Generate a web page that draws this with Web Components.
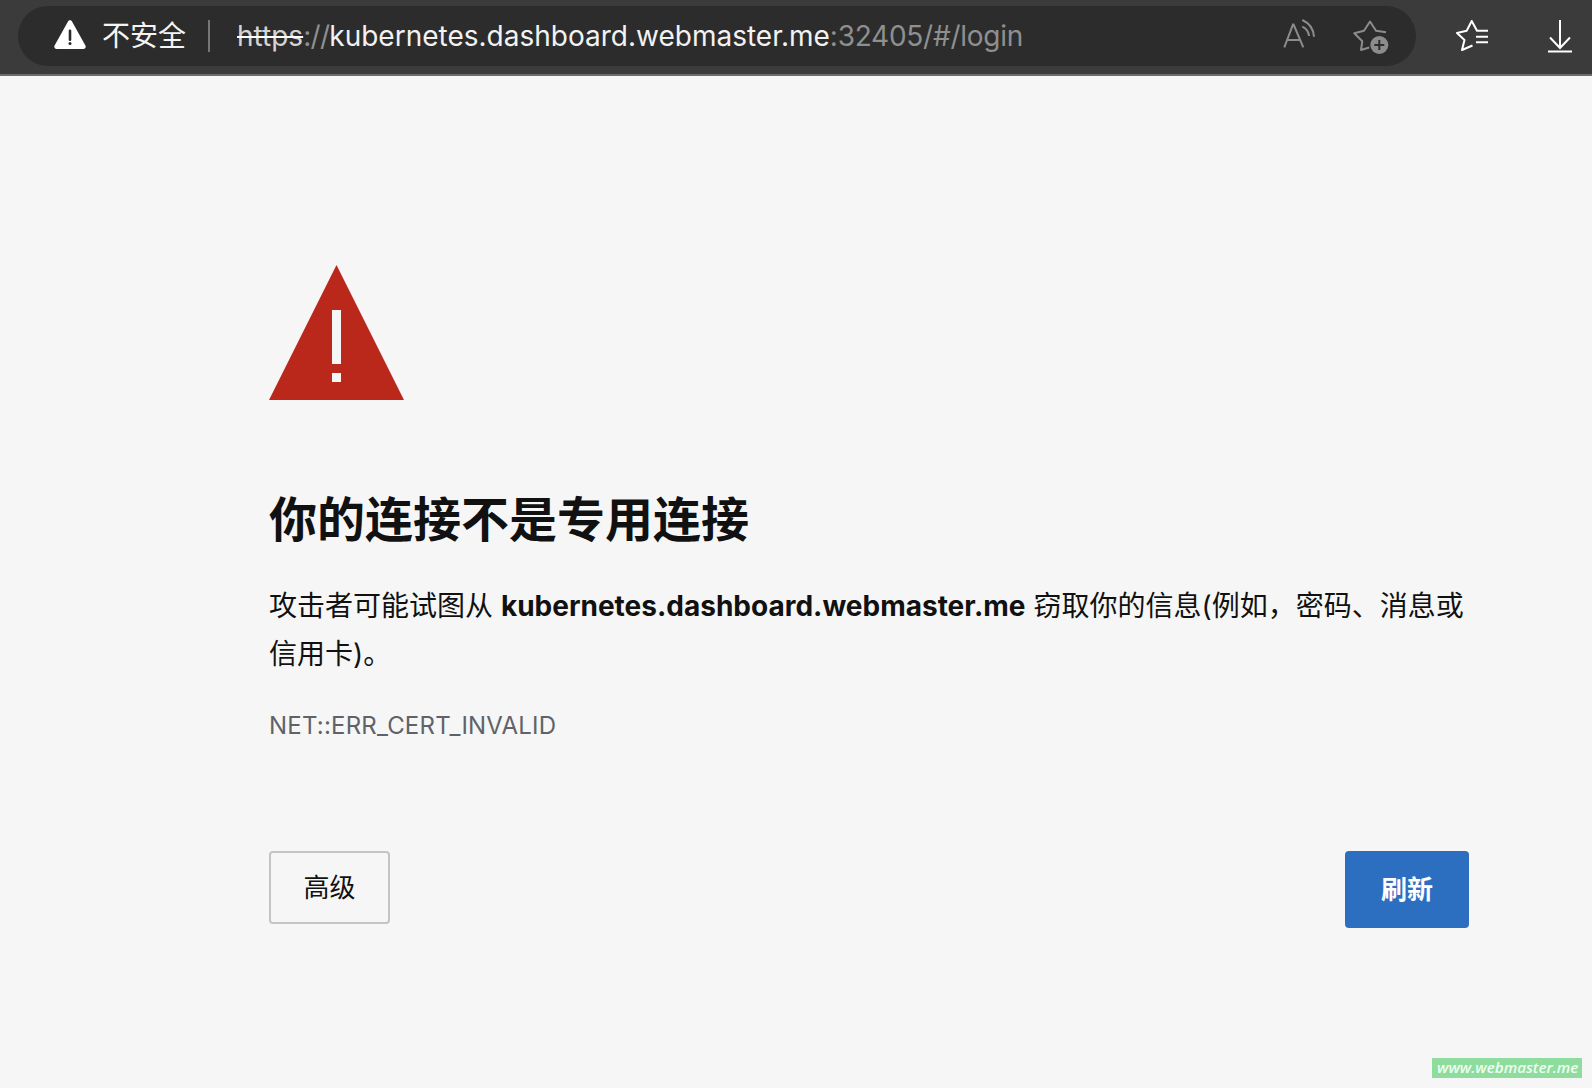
<!DOCTYPE html>
<html lang="zh">
<head>
<meta charset="utf-8">
<title>隐私错误</title>
<style>
  html, body { margin: 0; height: 100%; }
  body {
    display: flex;
    flex-direction: column;
    height: 1088px;
    overflow: hidden;
    background: #f6f6f6;
    font-family: "Inter", "Noto Sans CJK SC", sans-serif;
  }
  b { font-weight: 700; }
</style>
</head>
<body>
<browser-bar url-host="kubernetes.dashboard.webmaster.me" url-rest=":32405/#/login"></browser-bar>
<error-page>
  <span slot="title">你的连接不是专用连接</span>攻击者可能试图从 <b>kubernetes.dashboard.webmaster.me</b> 窃取你的信息(例如，密码、消息或<br>信用卡)。<span slot="code">NET::ERR_CERT_INVALID</span>
</error-page>
<water-mark>www.webmaster.me</water-mark>

<script>
// Toolbar with the address pill and the icons on the right
class BrowserBar extends HTMLElement {
    constructor() {
        super();
        this.attachShadow({mode: 'open'});
        this.shadowRoot.innerHTML = `
            <style>
                :host {
                    display: flex;
                    align-items: center;
                    box-sizing: border-box;
                    height: 76px;
                    padding: 6px 0 8px 18px;
                    background: #3b3b3b;
                    border-bottom: 2px solid #6c6c6c;
                    font-family: "Inter", "Noto Sans CJK SC", sans-serif;
                    flex: none;
                }
                .pill {
                    display: flex;
                    align-items: center;
                    box-sizing: border-box;
                    width: 1398px;
                    height: 60px;
                    padding: 0 27px 0 36px;
                    border-radius: 30px;
                    background: #2c2c2c;
                    color: #fff;
                    font-size: 28px;
                }
                .warn { width: 32px; height: 30px; margin-top: -2px; flex: none; }
                .label { margin: 0 0 4px 16px; font-size: 28px; color: #f4f4f4; }
                .sep { width: 2px; height: 32px; margin: 0 27px 0 22px; background: #777; flex: none; }
                .url { flex: 1; white-space: nowrap; color: #8f8f8f; }
                .url s { color: #d4d4d4; text-decoration-color: #fff; text-decoration-thickness: 2px; }
                .url .proto { letter-spacing: -.7px; }
                .url .host { color: #f2f2f2; }
                .url .rest { letter-spacing: -.25px; }
                .read { width: 32px; height: 30px; margin: 0 38px 4px 0; flex: none; }
                .fav { width: 36px; height: 36px; margin-top: 4px; flex: none; }
                .tools { display: flex; align-items: center; }
                .list { width: 36px; height: 34px; margin: 2px 0 0 39px; }
                .down { width: 26px; height: 33px; margin: 1px 0 0 56px; }
            </style>
            <div class="pill">
                <svg class="warn" viewBox="0 0 32 30">
                    <path fill="#fff" d="M16 .3c.9 0 1.600.5 2 1.200l13.400 24.100c.9 1.600-.2 3.400-2 3.400H2.600c-1.800 0-2.900-1.800-2-3.400L14 1.500c.4-.7 1.100-1.200 2-1.200z"/>
                    <rect x="14.700" y="9.500" width="2.600" height="11.500" rx="1.300" fill="#2c2c2c"/>
                    <circle cx="16" cy="23.500" r="1.500" fill="#2c2c2c"/>
                </svg>
                <span class="label">不安全</span>
                <span class="sep"></span>
                <span class="url"><s>https</s><span class="proto">://</span><span class="host"></span><span class="rest"></span></span>
                <svg class="read" viewBox="0 0 32 30" fill="none" stroke="#8c8c8c" stroke-width="2">
                    <path d="M1.300 28.300 10 5.500h.6l9.700 22.800M4.500 21H17"/>
                    <path d="M19.300 1C26 4 30.500 10 31 17.700M19.300 7.700c3.700 1.800 6.400 5.300 6.700 9.300"/>
                </svg>
                <svg class="fav" viewBox="0 0 36 36" fill="none">
                    <path stroke="#8c8c8c" stroke-width="2" stroke-linejoin="round" d="M33 12.300 23 10.700 17 1.500l-6 9.200-9.700 2.600 8 8L8 30l9-2.700"/>
                    <circle cx="26.300" cy="25" r="10.500" fill="#2c2c2c"/>
                    <circle cx="26.300" cy="25" r="9" fill="#8c8c8c"/>
                    <path stroke="#2c2c2c" stroke-width="2" d="M26.300 20v10M21.300 25h10"/>
                </svg>
            </div>
            <div class="tools">
                <svg class="list" viewBox="0 0 36 34" fill="none" stroke="#fff" stroke-width="2" stroke-linejoin="round">
                    <path d="M17.500 25.500 7 30l2.500-10L2 13l9.700-2.300L16.700 1 22 10.700h11M21 16.700h12M21 22.300h12"/>
                </svg>
                <svg class="down" viewBox="0 0 26 33" fill="none" stroke="#fff" stroke-width="2">
                    <path d="M13 0v28M3 17.500 13 28l10-10.500M1 31.500h24"/>
                </svg>
            </div>
        `;
    }

    connectedCallback() {
        this.shadowRoot.querySelector('.host').textContent = this.getAttribute('url-host');
        this.shadowRoot.querySelector('.rest').textContent = this.getAttribute('url-rest');
    }
}

// The interstitial itself: icon, heading, text, error code and two buttons
class ErrorPage extends HTMLElement {
    constructor() {
        super();
        this.attachShadow({mode: 'open'});
        this.shadowRoot.innerHTML = `
            <style>
                :host {
                    display: block;
                    flex: 1;
                    box-sizing: border-box;
                    padding: 189px 123px 0 269px;
                    color: #111;
                    font-family: "Inter", "Noto Sans CJK SC", sans-serif;
                }
                .icon { display: block; width: 135px; height: 135px; }
                h1 {
                    margin: 86px 0 0;
                    font-size: 48px;
                    line-height: 68px;
                    font-weight: 700;
                    color: #111;
                }
                .text {
                    margin-top: 28px;
                    font-size: 28px;
                    line-height: 48px;
                    color: #111;
                }
                .code {
                    margin-top: 30px;
                    font-size: 24px;
                    line-height: 36px;
                    letter-spacing: .2px;
                    color: #5f6368;
                }
                .actions {
                    display: flex;
                    justify-content: space-between;
                    align-items: flex-start;
                    margin-top: 107px;
                }
            </style>
            <svg class="icon" viewBox="0 0 135 135">
                <polygon points="67.500,0 135,135 0,135" fill="#b9281a"/>
                <rect x="63" y="45" width="9" height="54" fill="#f6f6f6"/>
                <rect x="63" y="108" width="9" height="9" fill="#f6f6f6"/>
            </svg>
            <h1><slot name="title"></slot></h1>
            <div class="text"><slot></slot></div>
            <div class="code"><slot name="code"></slot></div>
            <div class="actions">
                <action-button>高级</action-button>
                <action-button primary>刷新</action-button>
            </div>
        `;
    }
}

class ActionButton extends HTMLElement {
    constructor() {
        super();
        this.attachShadow({mode: 'open'});
        this.shadowRoot.innerHTML = `
            <style>
                :host {
                    display: flex;
                    align-items: center;
                    justify-content: center;
                    box-sizing: border-box;
                    width: 121px;
                    height: 73px;
                    padding-bottom: 4px;
                    border: 2px solid #c4c4c4;
                    border-radius: 4px;
                    font-size: 26px;
                    color: #111;
                }
                :host([primary]) {
                    width: 124px;
                    height: 77px;
                    border: none;
                    background: #2c6fc1;
                    color: #fff;
                    font-weight: 700;
                }
            </style>
            <slot></slot>
        `;
    }
}

class WaterMark extends HTMLElement {
    constructor() {
        super();
        this.attachShadow({mode: 'open'});
        this.shadowRoot.innerHTML = `
            <style>
                :host {
                    position: absolute;
                    left: 1432px;
                    top: 1058px;
                    box-sizing: border-box;
                    width: 150px;
                    height: 20px;
                    padding-left: 5px;
                    background: #8edc9e;
                    color: #ecfff0;
                    font: italic 600 15.2px/19px "Open Sans", sans-serif;
                    white-space: nowrap;
                }
            </style>
            <slot></slot>
        `;
    }
}

customElements.define('browser-bar', BrowserBar);
customElements.define('action-button', ActionButton);
customElements.define('error-page', ErrorPage);
customElements.define('water-mark', WaterMark);
</script>
</body>
</html>
